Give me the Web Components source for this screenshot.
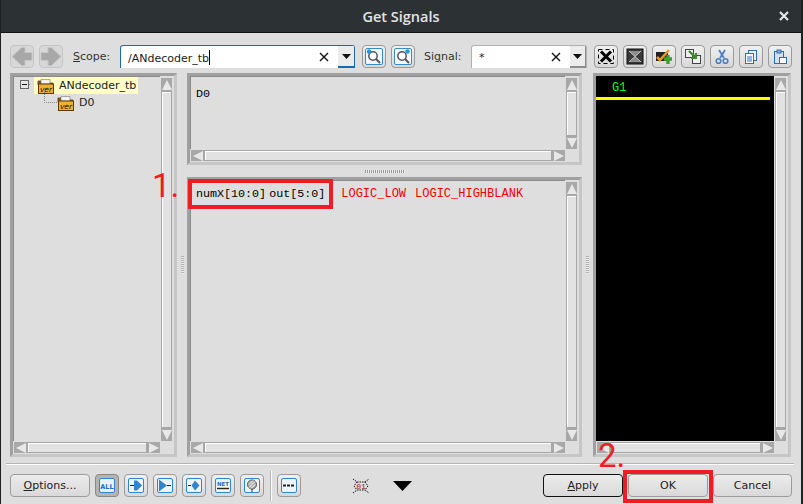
<!DOCTYPE html>
<html>
<head>
<meta charset="utf-8">
<style>
  html, body { margin: 0; padding: 0; background: #2b3033; }
  body { width: 803px; height: 504px; overflow: hidden; font-family: "DejaVu Sans", sans-serif; }
</style>
</head>
<body>
<template id="gs_window_tpl">
  <style>
    :host { display: block; position: relative; width: 803px; height: 504px; background: #1e2122; overflow: hidden; }
    .title { height: 32px; display: flex; align-items: center; justify-content: center; background: #2c3134; color: #e4e4e4;
      font: 600 14.5px "Open Sans", sans-serif; border-bottom: 1px solid #111; position: relative; margin-left: 1px; margin-right: 2px; }
    .close { position: absolute; right: 11px; top: 10px; width: 12px; height: 12px; }
    .body { background: #dedede; height: 471px; margin-left: 1px; margin-right: 2px; box-sizing: border-box; }
  </style>
  <div class="title">Get Signals
    <svg class="close" viewBox="0 0 12 12"><path d="M2 2 L10 10 M10 2 L2 10" stroke="#e8e8e8" stroke-width="2.2"/></svg>
  </div>
  <div class="body"><slot></slot></div>
  <slot name="overlay"></slot>
</template>

<template id="gs_button_tpl">
  <style>
    :host { display: inline-flex; box-sizing: border-box; width: 24px; height: 23px; align-items: center; justify-content: center;
      border: 1px solid #9a9a9a; border-radius: 4px; background: linear-gradient(#f0f0f0, #d8d8d8); flex: none; }
    :host([pressed]) { background: #b4b4b4; border-color: #888; }
    :host([flat]) { background: #d8d8d8; border-color: #c4c4c4; }
    ::slotted(svg) { display: block; flex: none; }
  </style>
  <slot></slot>
</template>

<template id="gs_push_tpl">
  <style>
    :host { display: inline-flex; box-sizing: border-box; height: 23px; align-items: center; justify-content: center;
      border: 1px solid #9c9c9c; border-radius: 4px; background: linear-gradient(#ececec, #d9d9d9);
      font: 11px "DejaVu Sans", sans-serif; color: #222; flex: none; }
    :host([focus]) { border-color: #111; }
  </style>
  <slot></slot>
</template>

<template id="gs_combo_tpl">
  <style>
    :host { display: block; box-sizing: border-box; height: 23px; background: #fff; position: relative; flex: none;
      border: 1px solid #b0b0b0; border-bottom: 0; border-radius: 3px 3px 0 0; font: 11px "DejaVu Sans", sans-serif; color: #222; }
    :host([active]) { border: 1px solid #1b6aa8; border-bottom: 0; }
    .row { display: flex; align-items: center; height: 100%; padding-left: 7px; padding-right: 0; }
    .val { flex: 1; white-space: nowrap; }
    .caret { display: inline-block; width: 1px; height: 15px; background: #000; vertical-align: -3px; }
    .x { width: 10px; height: 10px; margin-right: 9px; }
    .drop { width: 16px; height: 100%; box-sizing: border-box; display: flex; align-items: center; justify-content: center;
      background: #ececec; border-bottom: 2px solid #8e8e8e; border-right: 1px solid #8e8e8e; }
    :host([active]) .drop { border-bottom-color: #1b6aa8; border-right: 0; }
  </style>
  <div class="row">
    <span class="val"><slot></slot><span class="caret" id="caret"></span></span>
    <svg class="x" viewBox="0 0 10 10"><path d="M1 1 L9 9 M9 1 L1 9" stroke="#111" stroke-width="1.4"/></svg>
    <span class="drop"><svg width="9" height="5" viewBox="0 0 9 5"><path d="M0 0 H9 L4.5 5 Z" fill="#111"/></svg></span>
  </div>
</template>

<template id="gs_scrollbar_tpl">
  <style>
    :host { display: flex; box-sizing: border-box; background: #dedede; flex: none; }
    :host([dir="v"]) { flex-direction: column; width: 14px; padding: 2px 2px 0 1px; }
    :host([dir="h"]) { flex-direction: row; height: 13px; padding: 1px 0 1px 1px; }
    .arrow { flex: none; width: 11px; height: 11px; background: #a8a8a8; display: flex; align-items: center; justify-content: center; }
    :host([dir="v"]) .arrow { width: 100%; height: 13px; }
    :host([dir="h"]) .arrow { height: 100%; width: 13px; }
    .thumb { flex: 1; box-sizing: border-box; border: 1px solid #a6a6a6; background: #e2e2e2; box-shadow: inset 1px 1px 0 #fff; }
  </style>
  <span class="arrow" id="a"></span><span class="thumb"></span><span class="arrow" id="b"></span>
</template>

<template id="gs_pane_tpl">
  <style>
    :host { display: grid; box-sizing: border-box; border: 3px solid #a0a0a0; border-right-color: #c6c6c6; border-bottom-color: #c6c6c6;
      box-shadow: inset -1px -1px 0 #fff; grid-template-rows: minmax(0, 1fr) auto; grid-template-columns: minmax(0, 1fr) auto; background: #dedede; min-height: 0; }
    .content { min-width: 0; min-height: 0; overflow: hidden; position: relative; border: 1px solid #8a8a8a; border-width: 1px 0 0 1px; }
    .corner { background: #dedede; }
    :host([dark]) .content { background: #000; border: 0; }
  </style>
  <div class="content"><slot></slot></div>
  <gs-scrollbar dir="v"></gs-scrollbar>
  <gs-scrollbar dir="h"></gs-scrollbar>
  <div class="corner"></div>
</template>

<template id="gs_signal_tpl">
  <style>
    :host { display: inline-block; font: 11.7px "Liberation Mono", monospace; color: #000; white-space: nowrap; }
    :host([red]) { color: #f00000; font-size: 12px; }
  </style>
  <slot></slot>
</template>

<template id="gs_sash_tpl">
  <style>
    :host { display: flex; align-items: center; justify-content: center; }
    span { display: block; }
    :host([dir="h"]) span { width: 40px; height: 3px; background: repeating-linear-gradient(90deg, #999 0 1px, #eee 1px 2px); }
    :host([dir="v"]) span { width: 3px; height: 18px; background: repeating-linear-gradient(#b2b2b2 0 1px, #e8e8e8 1px 2px); }
  </style>
  <span></span>
</template>

<template id="gs_icon_tpl">
  <style>
    :host { display: inline-block; width: 18px; height: 16px; flex: none; }
    svg { display: block; }
  </style>
  <svg width="18" height="16" viewBox="0 0 18 16">
    <path d="M1 3 H7 L8.5 5 H16 V7 H1 Z" fill="#8a5a10" stroke="#5a3a08" stroke-width=".8"/>
    <path d="M4 1.5 H13 V6 H4 Z" fill="#f4f4f0" stroke="#777" stroke-width=".6"/>
    <rect x="1.5" y="6" width="15" height="9.5" fill="#f2b030" stroke="#5a3a08"/>
    <text x="9" y="14" text-anchor="middle" font-family="DejaVu Sans" font-style="italic" font-size="7.5" fill="#221100">ver</text>
  </svg>
</template>

<gs-window>
  <main style="display:flex;flex-direction:column;height:100%">
    <gs-toolbar style="display:flex;align-items:center;height:23px;margin:12px 0 0 9px;flex:none">
      <gs-button flat><svg width="22" height="21" viewBox="0 0 22 21"><path d="M1 10.5 L10.5 1.5 H14 V6.5 H21 V14.5 H14 V19.5 H10.5 Z" fill="#a8a8a8" stroke="#c6c6c6"/></svg></gs-button>
      <gs-button flat style="margin-left:5px"><svg width="22" height="21" viewBox="0 0 22 21"><path d="M21 10.5 L11.5 1.5 H8 V6.5 H1 V14.5 H8 V19.5 H11.5 Z" fill="#a8a8a8" stroke="#c6c6c6"/></svg></gs-button>
      <span style="font-size:11px;color:#333;margin-left:10px;width:47px"><u>S</u>cope:</span>
      <gs-combo active style="width:235px"><span>/ANdecoder_tb</span></gs-combo>
      <gs-button style="margin-left:7px"><svg width="18" height="17" viewBox="0 0 18 17"><rect x=".5" y=".5" width="17" height="16" rx="1.5" fill="#f4f7fa" stroke="#3a8ac8"/><circle cx="8" cy="8" r="4.2" fill="#fff" stroke="#556" stroke-width="1.5"/><path d="M11 11 L15 15" stroke="#555" stroke-width="2"/><circle cx="4" cy="3.5" r="2.2" fill="#1a9ae0"/></svg></gs-button>
      <gs-button style="margin-left:5px"><svg width="18" height="17" viewBox="0 0 18 17"><rect x=".5" y=".5" width="17" height="16" rx="1.5" fill="#f4f7fa" stroke="#3a8ac8"/><circle cx="8" cy="8" r="4.2" fill="#fff" stroke="#556" stroke-width="1.5"/><path d="M11 11 L15 15" stroke="#555" stroke-width="2"/><circle cx="13.5" cy="3.5" r="2.2" fill="#1a9ae0"/></svg></gs-button>
      <span style="font-size:11px;color:#333;margin-left:9px;width:47px">Si<u>g</u>nal:</span>
      <gs-combo style="width:116px"><span>*</span></gs-combo>
      <gs-button style="margin-left:7px"><svg width="18" height="17" viewBox="0 0 18 17"><path d="M4 3.5 L14 13.5 M14 3.5 L4 13.5" stroke="#000" stroke-width="3"/><rect x="1.5" y="1.5" width="15" height="14" fill="none" stroke="#000" stroke-dasharray="4 3"/></svg></gs-button>
      <gs-button style="margin-left:5px"><svg width="18" height="17" viewBox="0 0 18 17"><rect x="1" y="1" width="16" height="15" fill="#3a3a3a" stroke="#111"/><path d="M3 3 L9 8.5 L15 3 M3 14 L9 8.5 L15 14" fill="#8c8c8c" stroke="#c8c8c8"/></svg></gs-button>
      <gs-button style="margin-left:5px"><svg width="18" height="17" viewBox="0 0 18 17"><rect x="1" y="4" width="12" height="9" fill="#222"/><path d="M2 9 L5 12 L14 2" fill="none" stroke="#e8952a" stroke-width="2.6"/><path d="M9 11 H17 M13 7 V16" stroke="#3fa02f" stroke-width="3.4"/></svg></gs-button>
      <gs-button style="margin-left:5px"><svg width="18" height="17" viewBox="0 0 18 17"><rect x="1.5" y="1.5" width="8" height="8" fill="#eee" stroke="#444"/><rect x="8.5" y="7.5" width="8" height="8" fill="#eee" stroke="#444"/><path d="M5 3 L12 10 M12 5 V10 H7" fill="none" stroke="#3c8a2c" stroke-width="2.2"/></svg></gs-button>
      <gs-button style="margin-left:5px"><svg width="16" height="16" viewBox="0 0 16 16"><path d="M11 1 L6 9 M5 1 L10 9" stroke="#4f7fc0" stroke-width="1.8"/><circle cx="4.5" cy="12" r="2.3" fill="none" stroke="#4f7fc0" stroke-width="1.6"/><circle cx="11.5" cy="12" r="2.3" fill="none" stroke="#4f7fc0" stroke-width="1.6"/></svg></gs-button>
      <gs-button style="margin-left:5px"><svg width="16" height="16" viewBox="0 0 16 16"><rect x="5.5" y="1.5" width="8" height="10" fill="#eaf2fb" stroke="#2f6cb0"/><rect x="2.5" y="4.5" width="8" height="10" fill="#fff" stroke="#2f6cb0"/><path d="M4 8 H9 M4 10 H9 M4 12 H9" stroke="#2f6cb0"/></svg></gs-button>
      <gs-button style="margin-left:5px"><svg width="16" height="16" viewBox="0 0 16 16"><rect x="2.5" y="2.5" width="9" height="12" fill="#cfe0f2" stroke="#2f6cb0"/><rect x="5" y="1" width="4" height="3" fill="#9ab" stroke="#2f6cb0"/><rect x="7.5" y="8.5" width="7" height="6" fill="#fff" stroke="#2f6cb0"/></svg></gs-button>
    </gs-toolbar>

    <section style="display:grid;grid-template-columns:167px 10px 395px 11px 198px;height:384px;margin:5px 0 0 9px;flex:none">
      <gs-pane>
        <div style="display:flex;flex-direction:column;font:11px 'DejaVu Sans',sans-serif;color:#222">
          <div style="display:flex;align-items:center;height:17px;padding-left:6px">
            <svg width="11" height="11" viewBox="0 0 11 11" style="flex:none"><rect x=".5" y=".5" width="8" height="8" fill="#e6e6e6" stroke="#666"/><path d="M2 4.5 H7" stroke="#111"/><path d="M9 4.5 H11" stroke="#888" stroke-dasharray="1 1"/></svg>
            <span style="display:flex;align-items:center;gap:4px;background:#ffffc6;height:17px;padding:0 2px 0 3px;margin-left:3px"><gs-icon></gs-icon>ANdecoder_tb</span>
          </div>
          <div style="display:flex;align-items:center;height:17px;padding-left:30px">
            <svg width="13" height="17" viewBox="0 0 13 17" style="flex:none;overflow:visible"><path d="M.5 -4 V8.5 H13" fill="none" stroke="#888" stroke-dasharray="1 1"/></svg>
            <span style="display:flex;align-items:center;gap:4px"><gs-icon></gs-icon>D0</span>
          </div>
        </div>
      </gs-pane>
      <gs-sash dir="v"></gs-sash>
      <div style="display:grid;grid-template-rows:92px 12px minmax(0,1fr);min-height:0">
        <gs-pane>
          <div style="padding:5px 0 0 5px"><gs-signal>D0</gs-signal></div>
        </gs-pane>
        <gs-sash dir="h"></gs-sash>
        <gs-pane>
          <div style="display:flex;align-items:center;padding:6px 0 0 5px;gap:3px">
            <gs-signal>numX[10:0]</gs-signal><gs-signal>out[5:0]</gs-signal>
            <gs-signal red style="margin-left:13px">LOGIC_LOW</gs-signal><gs-signal red style="margin-left:6px">LOGIC_HIGH</gs-signal><gs-signal red style="margin-left:-3px">BLANK</gs-signal>
          </div>
        </gs-pane>
      </div>
      <gs-sash dir="v"></gs-sash>
      <gs-pane dark>
        <div style="font:12px/13px 'Liberation Mono',monospace;color:#0f0;padding:6px 0 0 16px">G1</div>
        <div style="height:3px;background:#ff0;margin:2px 4px 0 0"></div>
      </gs-pane>
    </section>

    <div style="height:1px;background:#b4b4b4;box-shadow:0 1px 0 #fff;margin:6px 0 0 5px;width:788px;flex:none"></div>

    <gs-toolbar style="display:flex;align-items:center;height:23px;margin:10px 0 0 9px;flex:none">
      <gs-push style="width:80px"><span><u>O</u>ptions...</span></gs-push>
      <gs-button pressed style="margin-left:5px"><svg width="16" height="15" viewBox="0 0 16 15"><rect x=".5" y=".5" width="15" height="14" rx="1.5" fill="#e8f0f8" stroke="#2f86cc"/><text x="8" y="10.5" text-anchor="middle" font-family="DejaVu Sans" font-weight="700" font-size="6.5" fill="#1f6fb8">ALL</text></svg></gs-button>
      <gs-button style="margin-left:5px"><svg width="16" height="15" viewBox="0 0 16 15"><rect x=".5" y=".5" width="15" height="14" rx="1.5" fill="#f0f4f8" stroke="#2f86cc"/><path d="M6 2.5 H9 L14 7.5 L9 12.5 H6 Z" fill="#2f86cc"/><path d="M2 7.5 H6" stroke="#222"/></svg></gs-button>
      <gs-button style="margin-left:5px"><svg width="16" height="15" viewBox="0 0 16 15"><rect x=".5" y=".5" width="15" height="14" rx="1.5" fill="#f0f4f8" stroke="#2f86cc"/><path d="M2 1.5 L10 7.5 L2 13.5 Z" fill="#2f86cc"/><path d="M10 7.5 H14" stroke="#222"/></svg></gs-button>
      <gs-button style="margin-left:5px"><svg width="16" height="15" viewBox="0 0 16 15"><rect x=".5" y=".5" width="15" height="14" rx="1.5" fill="#f0f4f8" stroke="#2f86cc"/><path d="M9 2.5 L13.5 7.5 L9 12.5 L5.5 7.5 Z" fill="#2f86cc"/><path d="M2 7.5 H5" stroke="#222"/></svg></gs-button>
      <gs-button style="margin-left:5px"><svg width="16" height="15" viewBox="0 0 16 15"><rect x=".5" y=".5" width="15" height="14" rx="1.5" fill="#f0f4f8" stroke="#2f86cc"/><text x="8" y="8" text-anchor="middle" font-family="DejaVu Sans" font-weight="700" font-size="5.5" fill="#1f6fb8">NET</text><path d="M2 10.5 H14" stroke="#222" stroke-width="1.4"/></svg></gs-button>
      <gs-button style="margin-left:5px"><svg width="16" height="15" viewBox="0 0 16 15"><rect x=".5" y=".5" width="15" height="14" rx="1.5" fill="#f0f4f8" stroke="#2f86cc"/><circle cx="8" cy="6.5" r="4.6" fill="#aaa" stroke="#333" stroke-width=".7"/><path d="M5 9.5 L11 3.5 M5 6.5 L9 2.5 M7 10.5 L11 6.5" stroke="#fff"/><path d="M8 11 V14" stroke="#333"/></svg></gs-button>
      <span style="width:1px;height:30px;background:#b4b4b4;box-shadow:1px 0 0 #fff;margin-left:6px;flex:none"></span>
      <gs-button style="margin-left:6px"><svg width="16" height="15" viewBox="0 0 16 15"><rect x=".5" y=".5" width="15" height="14" rx="1.5" fill="#f0f4f8" stroke="#2f86cc"/><path d="M2 7.5 H14" stroke="#222" stroke-width="2" stroke-dasharray="3 1"/></svg></gs-button>
      <svg width="18" height="16" viewBox="0 0 18 16" style="margin-left:51px;flex:none"><path d="M1 1 L5 4 H13 L17 1 M1 15 L5 12 H13 L17 15 M5 4 L2 8 L5 12 M13 4 L16 8 L13 12" fill="none" stroke="#111" stroke-dasharray="1.5 1"/><text x="9" y="11" text-anchor="middle" font-family="Liberation Mono" font-size="8" fill="#b01010">01</text></svg>
      <svg width="19" height="10" viewBox="0 0 19 10" style="margin-left:23px;flex:none"><path d="M0 0 H19 L9.5 10 Z" fill="#000"/></svg>
      <gs-push focus style="width:80px;margin-left:131px"><span><u>A</u>pply</span></gs-push>
      <gs-push style="width:80px;margin-left:5px">OK</gs-push>
      <gs-push style="width:79px;margin-left:5px">Cancel</gs-push>
    </gs-toolbar>
  </main>

  <div slot="overlay" style="position:absolute;left:188px;top:179px;width:145px;height:30px;box-sizing:border-box;border:4px solid #ee1c25"></div>
  <div slot="overlay" style="position:absolute;left:623px;top:470px;width:90px;height:33px;box-sizing:border-box;border:4px solid #ee1c25"></div>
  <div slot="overlay" style="position:absolute;left:152px;top:168px;font:400 33px/36px Roboto,sans-serif;color:#ee1c25">1.</div>
  <div slot="overlay" style="position:absolute;left:598px;top:438px;font:400 33px/36px Roboto,sans-serif;color:#ee1c25">2.</div>
</gs-window>

<script type="module">
    const plain = (name, tplId) => {
        customElements.define(name, class extends HTMLElement {
            constructor() {
                super();
                this.attachShadow({ mode: 'open' });
                const tpl = document.getElementById(tplId);
                this.shadowRoot.appendChild(tpl.content.cloneNode(true));
            }
        });
    };

    class GsCombo extends HTMLElement {
        constructor() {
            super();
            this.attachShadow({ mode: 'open' });
            this.shadowRoot.appendChild(document.getElementById('gs_combo_tpl').content.cloneNode(true));
        }
        connectedCallback() {
            if (!this.hasAttribute('active')) {
                this.shadowRoot.getElementById('caret').remove();
            }
        }
    }

    class GsScrollbar extends HTMLElement {
        constructor() {
            super();
            this.attachShadow({ mode: 'open' });
            this.shadowRoot.appendChild(document.getElementById('gs_scrollbar_tpl').content.cloneNode(true));
        }
        connectedCallback() {
            const vertical = this.getAttribute('dir') === 'v';
            const tri = (d) => `<svg width="10" height="10" viewBox="0 0 10 10"><path d="${d}" fill="#e8e8e8"/></svg>`;
            this.shadowRoot.getElementById('a').innerHTML = tri(vertical ? 'M5 0 L10 10 H0 Z' : 'M0 5 L10 0 V10 Z');
            this.shadowRoot.getElementById('b').innerHTML = tri(vertical ? 'M5 10 L10 0 H0 Z' : 'M10 5 L0 0 V10 Z');
        }
    }

    customElements.define('gs-scrollbar', GsScrollbar);
    customElements.define('gs-combo', GsCombo);
    plain('gs-window', 'gs_window_tpl');
    plain('gs-button', 'gs_button_tpl');
    plain('gs-push', 'gs_push_tpl');
    plain('gs-pane', 'gs_pane_tpl');
    plain('gs-signal', 'gs_signal_tpl');
    plain('gs-sash', 'gs_sash_tpl');
    plain('gs-icon', 'gs_icon_tpl');
</script>
</body>
</html>
